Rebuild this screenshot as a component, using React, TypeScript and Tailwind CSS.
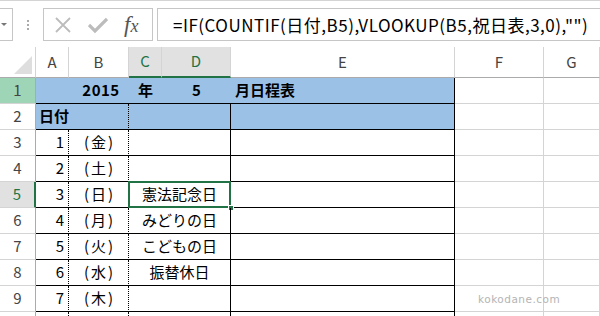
import React from 'react';

const COLS = ['A', 'B', 'C', 'D', 'E', 'F', 'G'];
const SELECTED_COLS = ['C', 'D'];

const rows = [
  { n: 3, d: '1', w: '(金)', h: '' },
  { n: 4, d: '2', w: '(土)', h: '' },
  { n: 5, d: '3', w: '(日)', h: '憲法記念日' },
  { n: 6, d: '4', w: '(月)', h: 'みどりの日' },
  { n: 7, d: '5', w: '(火)', h: 'こどもの日' },
  { n: 8, d: '6', w: '(水)', h: '振替休日' },
  { n: 9, d: '7', w: '(木)', h: '' },
];

const font = { fontFamily: '"Noto Sans CJK JP", "Noto Sans", sans-serif' };

const RowHead: React.FC<{ n?: number; selected?: boolean; hover?: boolean }> = ({ n, selected, hover }) => (
  <div
    className={
      'flex items-center justify-center border-b border-[#d4d4d4] text-[15px] ' +
      (selected
        ? 'bg-[#e1e1e1] text-[#217346] border-r-2 border-r-[#217346]'
        : hover
        ? 'bg-[#9fd5b7] text-[#444] border-r border-r-[#ababab]'
        : 'bg-white text-[#444] border-r border-r-[#ababab]')
    }
  >
    {n}
  </div>
);

const Grid: React.FC = () => <div className="border-r border-b border-[#d4d4d4]" />;

const App: React.FC = () => {
  return (
    <div className="w-[600px] h-[316px] overflow-hidden bg-white relative" style={font}>
      {/* formula bar */}
      <div className="h-[47px] border-t border-[#d4d4d4] flex items-center pt-[1px]">
        <div className="w-[13px] h-[33px] border border-l-0 border-[#c6c6c6] flex items-center justify-start pl-[1px]">
          <div className="w-0 h-0 border-l-[3px] border-r-[3px] border-t-[3px] border-l-transparent border-r-transparent border-t-[#777]" />
        </div>
        <div className="w-[30px] flex flex-col items-center gap-[2px]">
          <div className="w-[2px] h-[2px] bg-[#aaa]" />
          <div className="w-[2px] h-[2px] bg-[#aaa]" />
          <div className="w-[2px] h-[2px] bg-[#aaa]" />
        </div>
        <div className="w-[110px] h-[33px] border border-[#c6c6c6] flex items-center">
          <svg width="18" height="18" viewBox="0 0 18 18" className="ml-[10px]">
            <path d="M2 2 L16 16 M16 2 L2 16" stroke="#bcbcbc" strokeWidth="1.8" fill="none" />
          </svg>
          <svg width="20" height="18" viewBox="0 0 20 18" className="ml-[16px]">
            <path d="M1 9 L7 15 L19 3" stroke="#bcbcbc" strokeWidth="3.2" fill="none" />
          </svg>
          <span
            className="ml-[16px] text-[23px] italic text-[#555] leading-none"
            style={{ fontFamily: '"Liberation Serif", "DejaVu Serif", serif' }}
          >
            f<span className="text-[18px]">x</span>
          </span>
        </div>
        <div className="ml-[4px] flex-1 h-[33px] border border-r-0 border-[#c6c6c6] flex items-center pl-[15px]">
          <span className="text-[17px] text-black whitespace-nowrap tracking-[0.5px]">
            =IF(COUNTIF(日付,B5),VLOOKUP(B5,祝日表,3,0),"")
          </span>
        </div>
      </div>

      {/* sheet */}
      <div className="grid grid-cols-[36px_33px_60px_33px_69px_224px_89px_56px] grid-rows-[31px_repeat(10,26px)] text-[15px] text-black">
        {/* column headers */}
        <div className="bg-white border-r border-b border-r-[#d4d4d4] border-b-[#ababab] relative">
          <svg className="absolute right-[3px] bottom-[3px]" width="18" height="18" viewBox="0 0 18 18">
            <polygon points="18,0 18,18 0,18" fill="#dedede" />
          </svg>
        </div>
        {COLS.map(c => {
          const sel = SELECTED_COLS.includes(c);
          return (
            <div
              key={c}
              className={
                'flex items-center justify-center border-r border-r-[#d4d4d4] ' +
                (sel
                  ? 'bg-[#e1e1e1] text-[#217346] border-b-2 border-b-[#217346]'
                  : 'bg-white text-[#444] border-b border-b-[#ababab]')
              }
            >
              {c}
            </div>
          );
        })}

        {/* row 1 */}
        <RowHead n={1} hover />
        <div className="col-span-5 bg-[#9bc2e6] border-b border-black border-r border-r-black grid grid-cols-[33px_60px_33px_69px_1fr] font-bold">
          <div />
          <div className="flex items-center justify-center pl-[4px] tracking-[0.5px]">2015</div>
          <div className="flex items-center justify-center">年</div>
          <div className="flex items-center justify-center">5</div>
          <div className="flex items-center pl-[4px]">月日程表</div>
        </div>
        <Grid />
        <Grid />

        {/* row 2 */}
        <RowHead n={2} />
        <div className="col-span-2 bg-[#9bc2e6] border-b border-black border-r border-dotted border-r-black flex items-center pl-[3px] font-bold" style={{ borderBottomStyle: 'solid' }}>
          日付
        </div>
        <div className="col-span-2 bg-[#9bc2e6] border-b border-black border-r border-r-black" />
        <div className="bg-[#9bc2e6] border-b border-black border-r border-r-black" />
        <Grid />
        <Grid />

        {rows.map(r => (
          <React.Fragment key={r.n}>
            <RowHead n={r.n} selected={r.n === 5} />
            <div className="border-b border-black border-r border-r-black border-dotted flex items-center justify-end pr-[4px]" style={{ borderBottomStyle: 'solid' }}>
              {r.d}
            </div>
            <div className="border-b border-black border-r border-r-black border-dotted flex items-center justify-center tracking-[2px] pl-[2px]" style={{ borderBottomStyle: 'solid' }}>
              {r.w}
            </div>
            <div className="col-span-2 border-b border-black border-r border-r-black flex items-center justify-center relative">
              {r.h}
              {r.n === 5 && (
                <>
                  <div className="absolute left-[-1px] top-[-1px] right-[-1px] bottom-[-1px] border-2 border-[#217346]" />
                  <div className="absolute right-[-4px] bottom-[-4px] w-[6px] h-[6px] bg-[#217346] border border-white" />
                </>
              )}
            </div>
            <div className="border-b border-black border-r border-r-black" />
            <Grid />
            <Grid />
          </React.Fragment>
        ))}

        {/* row 10, only its top edge shows */}
        <RowHead />
        <div className="border-r border-dotted border-r-black" />
        <div className="border-r border-dotted border-r-black" />
        <div className="col-span-2 border-r border-r-black" />
        <div className="border-r border-r-black" />
        <Grid />
        <Grid />
      </div>

      <div
        className="absolute left-[478px] top-[292px] text-[10.5px] text-[#b4b4b4] tracking-[0.5px]"
        style={{ fontFamily: '"DejaVu Sans", sans-serif' }}
      >
        kokodane.com
      </div>
    </div>
  );
};

export default App;
